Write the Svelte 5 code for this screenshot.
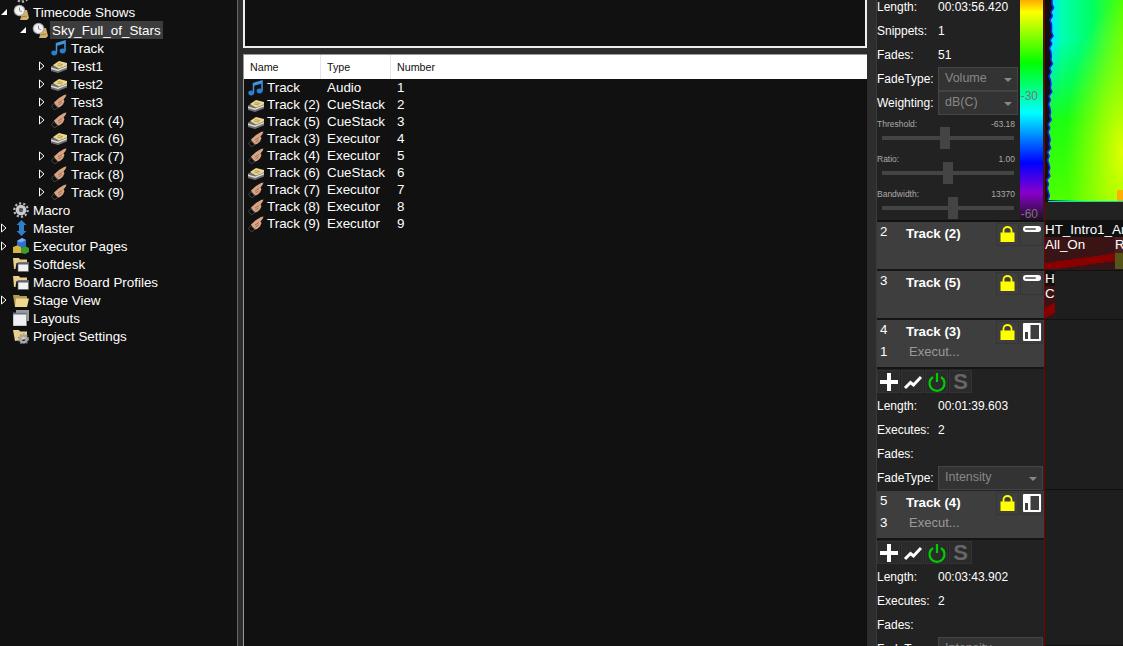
<script>
  const tree = [
    { label: "Timecode Shows", icon: "clock", arrow: "open", depth: 0 },
    { label: "Sky_Full_of_Stars", icon: "clock", arrow: "open", depth: 1, selected: true },
    { label: "Track", icon: "note", depth: 2 },
    { label: "Test1", icon: "stack", arrow: "closed", depth: 2 },
    { label: "Test2", icon: "stack", arrow: "closed", depth: 2 },
    { label: "Test3", icon: "hand", arrow: "closed", depth: 2 },
    { label: "Track (4)", icon: "hand", arrow: "closed", depth: 2 },
    { label: "Track (6)", icon: "stack", depth: 2 },
    { label: "Track (7)", icon: "hand", arrow: "closed", depth: 2 },
    { label: "Track (8)", icon: "hand", arrow: "closed", depth: 2 },
    { label: "Track (9)", icon: "hand", arrow: "closed", depth: 2 },
    { label: "Macro", icon: "gear", depth: 0 },
    { label: "Master", icon: "updown", arrow: "closed", depth: 0 },
    { label: "Executor Pages", icon: "cubes", arrow: "closed", depth: 0 },
    { label: "Softdesk", icon: "folderwin", depth: 0 },
    { label: "Macro Board Profiles", icon: "folderwin", depth: 0 },
    { label: "Stage View", icon: "folder", arrow: "closed", depth: 0 },
    { label: "Layouts", icon: "windows", depth: 0 },
    { label: "Project Settings", icon: "foldergear", depth: 0 },
  ];

  const rows = [
    ["note", "Track", "Audio", 1],
    ["stack", "Track (2)", "CueStack", 2],
    ["stack", "Track (5)", "CueStack", 3],
    ["hand", "Track (3)", "Executor", 4],
    ["hand", "Track (4)", "Executor", 5],
    ["stack", "Track (6)", "CueStack", 6],
    ["hand", "Track (7)", "Executor", 7],
    ["hand", "Track (8)", "Executor", 8],
    ["hand", "Track (9)", "Executor", 9],
  ];

  // jagged left edge of the spectrogram, leans left towards the bottom
  const edge = [];
  for (let y = 0; y <= 202; y += 4) {
    const lean = 7 - (y / 202) * 4;
    edge.push([lean + Math.sin(y * 0.9) * 1.2 + Math.sin(y * 0.23) * 0.8, y]);
  }
  const edgeLine = edge.map((p) => p.join(",")).join(" ");
  const wavePoly = edgeLine + " 78,202 78,0";
</script>

{#snippet icon(name)}
  <svg class="ico" viewBox="0 0 16 16" width="16" height="16">
    {#if name === "clock"}
      <path d="M6 6h8l2 8-2 2H7l1-3z" fill="#d3b26c" />
      <path d="M8 13l6-1" stroke="#8a6f35" stroke-width=".7" />
      <circle cx="6.500" cy="6.500" r="5.800" fill="#a8a8a8" />
      <circle cx="6.500" cy="6.500" r="4.600" fill="#f2f2f2" />
      <path d="M6.500 3.500v3.200l2.400 1.100" stroke="#888" fill="none" />
    {:else if name === "note"}
      <path d="M5.500 13V3.500L14 1v10" stroke="#3f97e0" stroke-width="1.500" fill="none" />
      <path d="M5.500 3.500L14 1v2.500L5.500 6z" fill="#3f97e0" />
      <ellipse cx="3.200" cy="13" rx="2.900" ry="2.400" fill="#2a80d0" />
      <ellipse cx="11.600" cy="11" rx="2.900" ry="2.400" fill="#2a80d0" />
    {:else if name === "stack"}
      <path d="M0 8.500l6-2.500 10 2v3.500L7 15 0 13z" fill="#6f6f6f" />
      <path d="M0 9.500l7 2 9-3.500v1.500l-9 3.500-7-2z" fill="#dcdcdc" />
      <path d="M2 7l6-4 8 2v2.500L8 10.500z" fill="#ecd98f" />
      <path d="M7 5.500l5 1M6 7l5 1" stroke="#a58f46" stroke-width=".8" />
    {:else if name === "hand"}
      <path d="M3 8.500L8 4l5-3 2.500-.5-1 2.500-2 2.500 1 1.500-1.500 3.500-3 2.500-3.500 1z" fill="#d8a483" />
      <path d="M7 9l4-2.500M7.500 11l3-2" stroke="#8f5f46" stroke-width=".8" />
      <path d="M.5 12.500L3 9.500l4 4L3.500 16z" fill="#111" stroke="#666" stroke-width=".6" />
    {:else if name === "gear"}
      <circle cx="8" cy="8" r="6.700" fill="none" stroke="#b4b6bb" stroke-width="2.200" stroke-dasharray="2.200 2" />
      <circle cx="8" cy="8" r="5.300" fill="#c9cbd0" />
      <circle cx="8" cy="8" r="2.200" fill="#55575c" />
    {:else if name === "updown"}
      <path d="M8.500 0l5 5H11v6h2.500l-5 5-5-5H6V5H3.500z" fill="#2d7fc8" />
    {:else if name === "cubes"}
      <path d="M4 3l5-3 4 2v6l-5 2-4-2z" fill="#2f6fd0" />
      <path d="M9 0l4 2-5 2.500-4-1.500z" fill="#7ab0f0" />
      <path d="M0 9l4-1.500 4 1.500v6H0z" fill="#d6b53a" />
      <path d="M8 10l4-2 4 2v4l-4 2-4-1z" fill="#3f9b2c" />
    {:else if name === "folderwin"}
      <path d="M0 2h6l1 1.500h7V7H3.500L2.500 13H1z" fill="#e8cf8c" />
      <path d="M5 6.500h10.500v9H5z" fill="#f2f2f2" stroke="#666" stroke-width=".7" />
      <path d="M5 6.500h10.500v2H5z" fill="#5b6270" />
    {:else if name === "folder"}
      <path d="M0 3h6l1 1h7v11H2z" fill="#b99a52" />
      <path d="M3 6.500h13L14 15H2z" fill="#f0d890" />
    {:else if name === "windows"}
      <path d="M3 0h13v11H3z" fill="#9a9a9a" />
      <path d="M0 3h13.500v13H0z" fill="#eef0f2" stroke="#8a8a8a" stroke-width=".8" />
      <path d="M0 3h13.500v1.500H0z" fill="#6a7080" />
    {:else if name === "foldergear"}
      <path d="M0 2h6l1 1.500h7V11L2 13z" fill="#e8cf8c" />
      <circle cx="10.500" cy="11" r="3.300" fill="none" stroke="#a8aaae" stroke-width="2.600" />
      <circle cx="10.500" cy="11" r="5" fill="none" stroke="#8a8c90" stroke-width="1.200" stroke-dasharray="1.600 1.600" />
    {/if}
  </svg>
{/snippet}

{#snippet lock()}
  <svg viewBox="0 0 15 16" width="15" height="16">
    <path d="M3.500 7V4.500a4 3.500 0 0 1 8 0V7" fill="none" stroke="#ff0" stroke-width="1.800" />
    <rect x="0.500" y="6.500" width="14" height="9.500" fill="#ff0" />
  </svg>
{/snippet}

{#snippet panelIcon()}
  <svg viewBox="0 0 18 18" width="18" height="18">
    <rect width="18" height="18" rx="1" fill="#fff" />
    <rect x="7.500" y="2" width="8.500" height="14" fill="#3e3e3e" />
    <rect x="2" y="9" width="3" height="7" fill="#3e3e3e" />
  </svg>
{/snippet}

{#snippet pill()}
  <svg viewBox="0 0 18 6" width="18" height="6">
    <rect width="18" height="6" rx="3" fill="#fff" />
    <rect x="2" y="2" width="11" height="2" rx="1" fill="#777" />
  </svg>
{/snippet}

{#snippet slider(name, value, pos)}
  <div class="slider">
    <div class="slider-top"><span>{name}</span><span>{value}</span></div>
    <div class="slider-track"><i style="left: {pos}px"></i></div>
  </div>
{/snippet}

{#snippet header(num, title, sub, subLabel, kind)}
  <div class="hdr">
    <div class="hdr-row">
      <span class="num">{num}</span>
      <b>{title}</b>
      <span class="btn">{@render lock()}</span>
      <span class="btn side">{#if kind === "pill"}<span class="pill">{@render pill()}</span>{:else}{@render panelIcon()}{/if}</span>
    </div>
    {#if sub}
      <div class="hdr-sub"><span class="num">{sub}</span><span class="exec">{subLabel}</span></div>
    {/if}
  </div>
{/snippet}

{#snippet tools()}
  <div class="tools">
    <span class="tool">
      <svg viewBox="0 0 20 20" width="20" height="20"><path d="M8 1h4v7h7v4h-7v7H8v-7H1V8h7z" fill="#fff" /></svg>
    </span>
    <span class="tool">
      <svg viewBox="0 0 20 20" width="20" height="20"><path d="M2 16l5.500-5.500 3 2.500L18 5" fill="none" stroke="#fff" stroke-width="3" /></svg>
    </span>
    <span class="tool">
      <svg viewBox="0 0 20 20" width="20" height="20"><path d="M6 5a7.500 7.500 0 1 0 8 0" fill="none" stroke="#0c0" stroke-width="2.200" /><path d="M10 1v9" stroke="#0c0" stroke-width="2.200" /></svg>
    </span>
    <span class="tool s">S</span>
  </div>
{/snippet}

{#snippet field(label, value)}
  <div class="field"><span>{label}</span><span>{value}</span></div>
{/snippet}

{#snippet combo(label, value)}
  <div class="field">
    <span>{label}</span>
    <span class="combo">{value}<i></i></span>
  </div>
{/snippet}

<div class="app">
  <aside class="tree">
    <div class="cut">{@render icon("gear")}</div>
    {#each tree as t}
      <div class="node" style="padding-left: {t.depth * 19}px">
        <span class="arrow">
          {#if t.arrow === "open"}
            <svg viewBox="0 0 8 8" width="8" height="8"><path d="M7 1v6H1z" fill="#fff" /></svg>
          {:else if t.arrow === "closed"}
            <svg viewBox="0 0 8 10" width="8" height="10"><path d="M1.500 1l4.500 4-4.500 4z" fill="#111" stroke="#fff" /></svg>
          {/if}
        </span>
        {@render icon(t.icon)}
        <span class="label" class:selected={t.selected}>{t.label}</span>
      </div>
    {/each}
  </aside>

  <main class="middle">
    <div class="preview"></div>
    <div class="list">
      <div class="list-head">
        <span class="c1">Name</span><span class="c2">Type</span><span class="c3">Number</span>
      </div>
      {#each rows as r}
        <div class="list-row">
          <span class="c1">{@render icon(r[0])}<em>{r[1]}</em></span>
          <span class="c2">{r[2]}</span>
          <span class="c3">{r[3]}</span>
        </div>
      {/each}
    </div>
  </main>

  <section class="inspector">
    <div class="audio-info">
      <div class="track-info">
        {@render field("Length:", "00:03:56.420")}
        {@render field("Snippets:", "1")}
        {@render field("Fades:", "51")}
        {@render combo("FadeType:", "Volume")}
        {@render combo("Weighting:", "dB(C)")}
        {@render slider("Threshold:", "-63.18", 58)}
        {@render slider("Ratio:", "1.00", 61)}
        {@render slider("Bandwidth:", "13370", 66)}
      </div>
      <div class="scale"><span>-30</span><span>-60</span></div>
    </div>
    {@render header(2, "Track (2)", null, null, "pill")}
    {@render header(3, "Track (5)", null, null, "pill")}
    {@render header(4, "Track (3)", 1, "Execut...", "panel")}
    {@render tools()}
    <div class="fields">
      {@render field("Length:", "00:01:39.603")}
      {@render field("Executes:", "2")}
      {@render field("Fades:", "")}
      {@render combo("FadeType:", "Intensity")}
    </div>
    {@render header(5, "Track (4)", 3, "Execut...", "panel")}
    {@render tools()}
    <div class="fields">
      {@render field("Length:", "00:03:43.902")}
      {@render field("Executes:", "2")}
      {@render field("Fades:", "")}
      {@render combo("FadeType:", "Intensity")}
    </div>
  </section>

  <section class="timeline">
    <div class="audio-lane">
      <svg class="wave" viewBox="0 0 78 202" width="78" height="202">
        <defs>
          <linearGradient id="waveX">
            <stop offset="0.06" stop-color="#00e8ff" />
            <stop offset="0.2" stop-color="#00ffb0" />
            <stop offset="0.6" stop-color="#00ff60" />
            <stop offset="1" stop-color="#50ff00" />
          </linearGradient>
          <linearGradient id="waveY" x2="0" y2="1">
            <stop offset="0.2" stop-color="#00ff00" stop-opacity="0" />
            <stop offset="0.6" stop-color="#20ff00" stop-opacity="0.9" />
            <stop offset="1" stop-color="#50ff00" />
          </linearGradient>
          <radialGradient id="waveR" cx="1" cy="0.75" r="0.75">
            <stop offset="0" stop-color="#ffff00" stop-opacity="0.85" />
            <stop offset="1" stop-color="#ffff00" stop-opacity="0" />
          </radialGradient>
        </defs>
        <polygon points={wavePoly} fill="url(#waveX)" />
        <polygon points={wavePoly} fill="url(#waveY)" />
        <polygon points={wavePoly} fill="url(#waveR)" />
        <rect x="72" y="190" width="6" height="12" fill="#ffb000" />
        <polyline points={edgeLine} fill="none" stroke="#2020ff" stroke-width="1.500" />
        <path d="M3 201.500h75" stroke="#00e0c0" />
      </svg>
    </div>
    <div class="lane l1">
      <div class="clip-name">HT_Intro1_Am</div>
      <div class="clips">
        <div class="clip red">All_On</div>
        <div class="clip olive">R</div>
      </div>
    </div>
    <div class="lane l2">
      <div class="clip-name small">HT</div>
      <div class="clips"><div class="clip red narrow">C</div></div>
    </div>
    <div class="lane l3"></div>
    <div class="lane l4"></div>
  </section>
</div>

<style>
  :global(body) {
    margin: 0;
    background: #111;
  }

  .app {
    display: flex;
    width: 1123px;
    height: 646px;
    overflow: hidden;
    background: #111;
    color: #fff;
    font-family: "Liberation Sans", Arial, sans-serif;
    font-size: 13.4px;
  }

  .tree {
    width: 238px;
    flex: none;
    box-sizing: border-box;
    border-right: 1px solid #666;
    background: #111;
  }
  .cut {
    height: 3px;
    overflow: hidden;
    padding-left: 11px;
    display: flex;
    align-items: flex-end;
  }
  .node {
    display: flex;
    align-items: center;
    height: 18px;
  }
  .arrow {
    display: flex;
    justify-content: center;
    align-items: center;
    width: 13px;
    flex: none;
    margin-left: -3px;
  }
  .ico {
    flex: none;
    margin-left: 3px;
    margin-right: 2px;
  }
  .label {
    display: flex;
    align-items: center;
    height: 18px;
    padding: 0 2px;
    white-space: nowrap;
  }
  .label.selected {
    background: #3c3c3c;
  }

  .middle {
    width: 638px;
    flex: none;
    box-sizing: border-box;
    padding: 0 9px 0 5px;
    display: flex;
    flex-direction: column;
    gap: 6px;
    background: #2d2d2d;
  }
  .preview {
    height: 48px;
    flex: none;
    box-sizing: border-box;
    background: #111;
    border: 2px solid #eee;
    border-top: 0;
  }
  .list {
    flex: 1;
    background: #111;
    border-left: 1px solid #999;
    border-top: 1px solid #999;
  }
  .list-head {
    display: flex;
    align-items: center;
    height: 24px;
    background: #fff;
    color: #111;
    font-size: 10.7px;
  }
  .list-head span {
    box-sizing: border-box;
    height: 100%;
    display: flex;
    align-items: center;
    padding-left: 6px;
  }
  .list-head .c1,
  .list-head .c2 {
    border-right: 1px solid #e5e5e5;
  }
  .c1 {
    width: 77px;
    flex: none;
    display: flex;
    align-items: center;
    white-space: nowrap;
  }
  .c2 {
    width: 70px;
    flex: none;
    padding-left: 6px;
    box-sizing: border-box;
  }
  .c3 {
    padding-left: 6px;
  }
  .list-row {
    display: flex;
    align-items: center;
    height: 17px;
  }
  .list-row em {
    font-style: normal;
    margin-left: 1px;
  }
  .list-row .c1 .ico {
    margin-left: 4px;
    margin-right: 2px;
  }

  .inspector {
    width: 168px;
    flex: none;
    box-sizing: border-box;
    background: #222;
    border-left: 1px solid #3a3a3a;
    font-size: 12px;
  }
  .audio-info {
    display: flex;
    height: 222px;
    box-sizing: border-box;
    overflow: hidden;
    border-bottom: 2px solid #111;
  }
  .track-info {
    width: 143px;
    flex: none;
    margin-top: -5px;
  }
  .track-info .combo {
    width: 80px;
  }
  .field {
    display: flex;
    align-items: center;
    height: 24px;
  }
  .field > span:first-child {
    width: 61px;
    flex: none;
  }
  .combo {
    position: relative;
    box-sizing: border-box;
    width: 105px;
    height: 24px;
    padding: 0 6px 3px;
    display: flex;
    align-items: center;
    background: #333;
    border: 1px solid #444;
    color: #888;
    font-size: 12.5px;
  }
  .combo i {
    position: absolute;
    right: 5px;
    top: 10px;
    border: 4px solid transparent;
    border-top-color: #888;
    border-bottom: 0;
  }
  .slider {
    height: 35px;
    color: #aaa;
    font-size: 8.5px;
  }
  .slider-top {
    display: flex;
    justify-content: space-between;
    padding: 3px 5px 0 0;
    height: 12px;
    align-items: center;
  }
  .slider-track {
    position: relative;
    margin: 6px 6px 0 5px;
    height: 4px;
    background: #444;
  }
  .slider-track i {
    position: absolute;
    top: -9px;
    width: 10px;
    height: 22px;
    background: #444;
  }
  .scale {
    width: 23px;
    flex: none;
    display: flex;
    flex-direction: column;
    align-items: flex-end;
    justify-content: space-between;
    box-sizing: border-box;
    padding: 89px 5px 0 0;
    color: #777;
    font-size: 12px;
    background: linear-gradient(#fa0 0, #ff0 12px, #0f0 63px, #0ff 113px, #00f 163px, #80c 193px, #201020 220px);
  }
  .scale span:last-child {
    margin-bottom: -1px;
  }

  .hdr {
    box-sizing: border-box;
    height: 49px;
    background: #3e3e3e;
    border-bottom: 2px solid #151515;
    font-size: 13.3px;
  }
  .hdr-row {
    display: flex;
    height: 23px;
    align-items: center;
  }
  .num {
    width: 29px;
    flex: none;
    padding-left: 3px;
    box-sizing: border-box;
  }
  .hdr-row .num {
    margin-top: -4px;
  }
  .hdr b {
    flex: 1;
    font-size: 13.3px;
  }
  .btn {
    width: 23px;
    height: 23px;
    margin: 1px 1px 0 0;
    display: flex;
    justify-content: center;
    align-items: center;
    border: 1px solid #363636;
    box-sizing: border-box;
  }
  .pill {
    align-self: flex-start;
    margin-top: 2px;
    line-height: 0;
  }
  .hdr-sub {
    display: flex;
    align-items: center;
    height: 20px;
    margin-top: -2px;
  }
  .exec {
    color: #9a9a9a;
    padding-left: 3px;
    font-size: 13px;
  }

  .tools {
    display: flex;
    gap: 1px;
    padding: 1px 0 0;
    height: 24px;
    box-sizing: border-box;
  }
  .tool {
    width: 23px;
    height: 23px;
    display: flex;
    justify-content: center;
    align-items: center;
    background: #2b2b2b;
    border: 1px solid #333;
    box-sizing: border-box;
  }
  .tool.s {
    color: #666;
    font-weight: 700;
    font-size: 22px;
  }
  .fields {
    height: 98px;
    padding-top: 1px;
    box-sizing: border-box;
  }

  .timeline {
    flex: 1;
    min-width: 0;
    background: #1e1e1e;
    border-left: 1px solid #7a0000;
    overflow: hidden;
  }
  .audio-lane {
    height: 222px;
    box-sizing: border-box;
    background: #222;
    border-bottom: 2px solid #111;
  }
  .wave {
    display: block;
    background: #111;
  }
  .lane {
    box-sizing: border-box;
    border-bottom: 1px solid #111;
    overflow: hidden;
    white-space: nowrap;
  }
  .l1,
  .l2 {
    height: 49px;
  }
  .l3 {
    height: 170px;
  }
  .l4 {
    height: 156px;
  }
  .clip-name {
    height: 15px;
    line-height: 15px;
    background: #111;
  }
  .clip-name.small {
    width: 10px;
    overflow: hidden;
  }
  .clips {
    display: flex;
    height: 32px;
  }
  .clip {
    height: 100%;
    overflow: hidden;
    line-height: 15px;
  }
  .clip.red {
    width: 70px;
    background: linear-gradient(172deg, #3a1414 62%, #8a0000 63%, #8a0000 80%, #3a1414 81%);
  }
  .clip.red.narrow {
    width: 10px;
    background: linear-gradient(150deg, #3a1414 58%, #8a0000 59%, #8a0000 85%, #3a1414 86%);
  }
  .clip.olive {
    flex: 1;
    background: linear-gradient(#4c1f1f 50%, #55551a 50%);
  }
</style>
